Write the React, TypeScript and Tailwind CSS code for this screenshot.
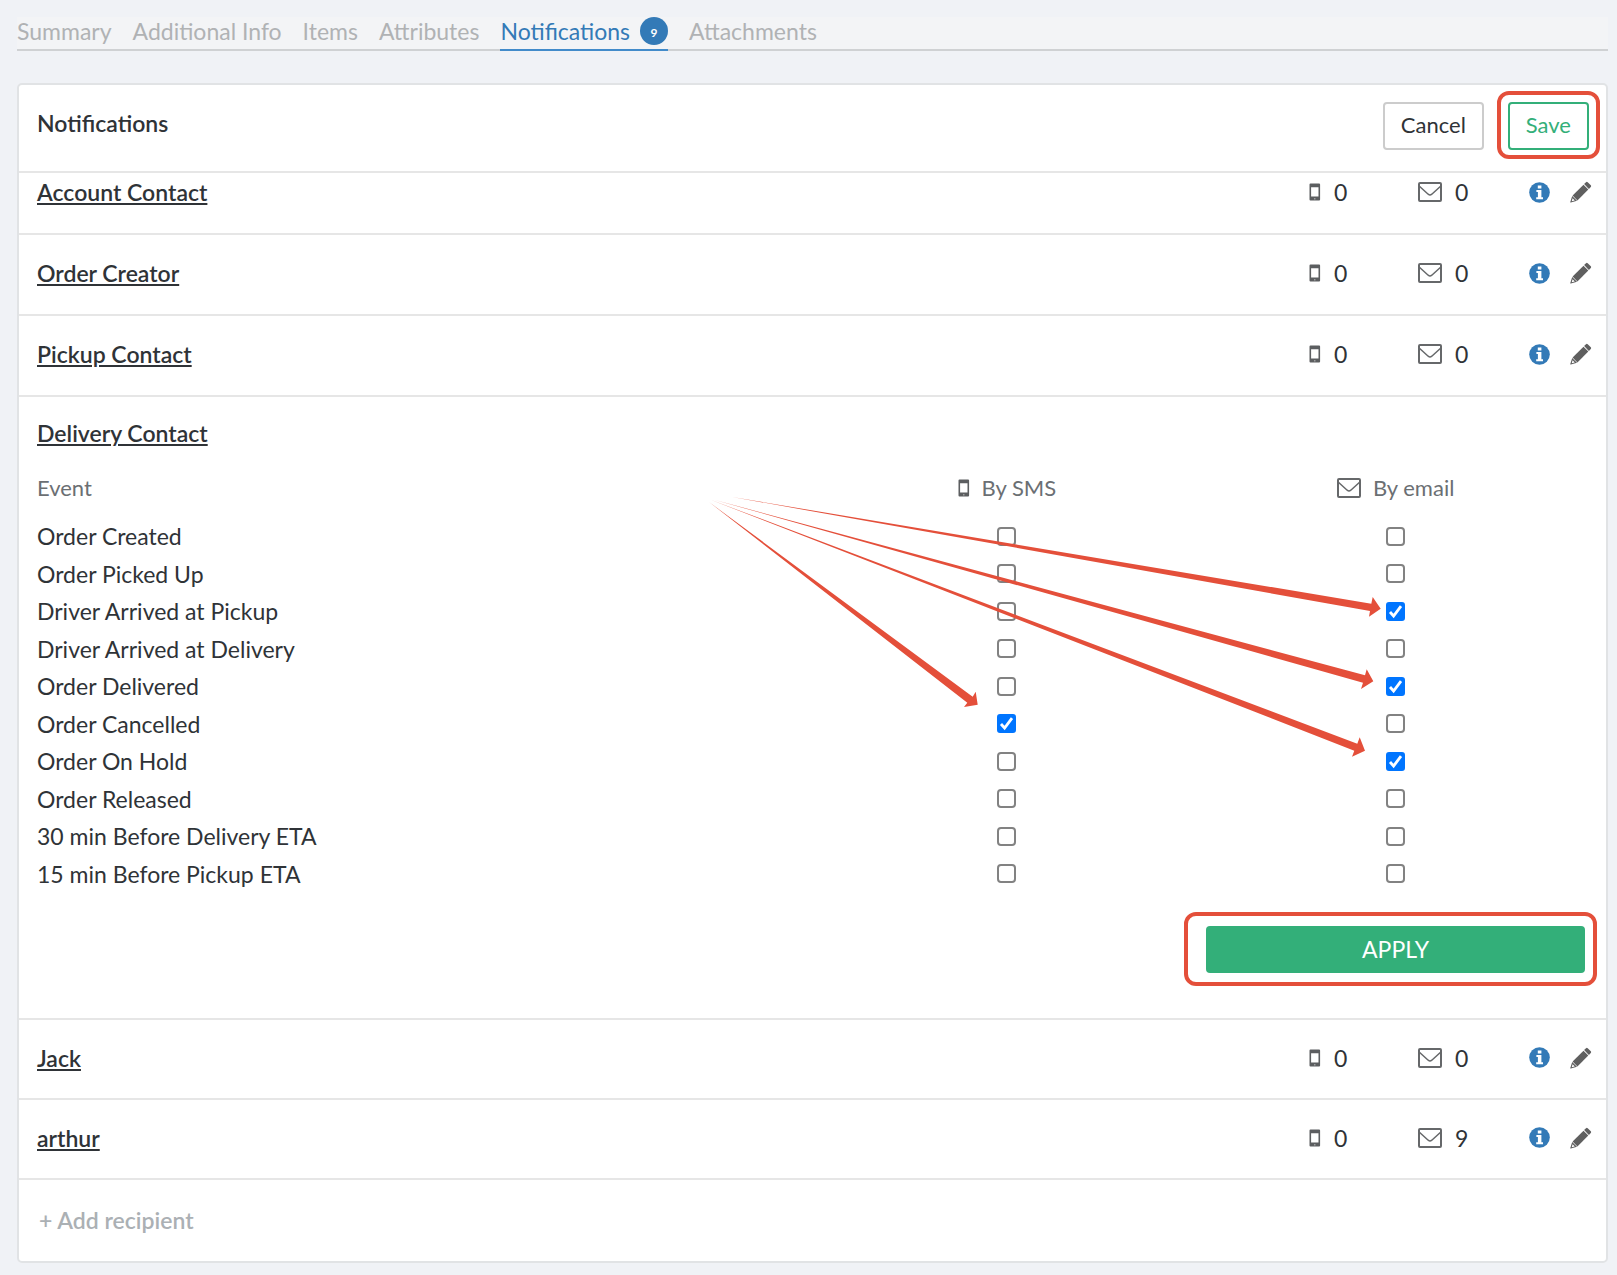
import React, { useState } from "react";

type Recipient = {
    name: string;
    sms: number;
    email: number;
};

type EventRow = {
    label: string;
    sms: boolean;
    email: boolean;
};

const TABS = ["Summary", "Additional Info", "Items", "Attributes", "Notifications", "Attachments"];

const TOP_RECIPIENTS: Recipient[] = [
    { name: "Account Contact", sms: 0, email: 0 },
    { name: "Order Creator", sms: 0, email: 0 },
    { name: "Pickup Contact", sms: 0, email: 0 },
];

const BOTTOM_RECIPIENTS: Recipient[] = [
    { name: "Jack", sms: 0, email: 0 },
    { name: "arthur", sms: 0, email: 9 },
];

const EVENTS: EventRow[] = [
    { label: "Order Created", sms: false, email: false },
    { label: "Order Picked Up", sms: false, email: false },
    { label: "Driver Arrived at Pickup", sms: false, email: true },
    { label: "Driver Arrived at Delivery", sms: false, email: false },
    { label: "Order Delivered", sms: false, email: true },
    { label: "Order Cancelled", sms: true, email: false },
    { label: "Order On Hold", sms: false, email: true },
    { label: "Order Released", sms: false, email: false },
    { label: "30 min Before Delivery ETA", sms: false, email: false },
    { label: "15 min Before Pickup ETA", sms: false, email: false },
];

const PhoneIcon = () => (
    <svg className="w-3 h-[18px] shrink-0" viewBox="0 0 12 18" fill="#5c5e60" aria-hidden="true">
        <path fillRule="evenodd" d="M1.5 .4h8.6a1 1 0 0 1 1 1v15.2a1 1 0 0 1-1 1H1.5a1 1 0 0 1-1-1V1.4a1 1 0 0 1 1-1zM2.1 4.2v9.4h7.4V4.2zM5.2 15.4v.9h1.2v-.9z" />
    </svg>
);

const MailIcon = () => (
    <svg className="w-6 h-5 shrink-0" viewBox="0 0 24 20" fill="none" stroke="#66686a" aria-hidden="true">
        <rect x="1" y="1" width="22" height="18" rx="1" strokeWidth="2" />
        <path d="M1.4 4.2 10.2 12.2Q12 13.6 13.8 12.2L22.6 4.2" strokeWidth="1.5" />
    </svg>
);

const InfoIcon = () => (
    <svg className="size-[21px]" viewBox="0 0 21 21" aria-hidden="true">
        <circle cx="10.5" cy="10.5" r="10.3" fill="#337ab7" />
        <path fill="#fff" d="M8.8 3.4h3.6v3H8.8zM7.4 8h5v7.2h1.6v2H7.2v-2h1.7V10H7.4z" />
    </svg>
);

const PencilIcon = () => (
    <svg className="size-[22px]" viewBox="0 0 22 22" fill="#5f5f5f" aria-hidden="true">
        <path d="M16 1.2a1.2 1.2 0 0 1 1.7 0l3.1 3.1a1.2 1.2 0 0 1 0 1.7l-1.9 1.9-4.8-4.8z" />
        <path d="M13.5 3.7l4.8 4.8L7.4 19.4 2.6 14.6z" />
        <path fillRule="evenodd" d="M2.2 15l4.8 4.8-6.2 1.8a.4.4 0 0 1-.5-.5zM2.6 17.2l-.9 3.1 3.1-.9z" />
    </svg>
);

const Checkbox = ({ label, defaultChecked }: { label: string; defaultChecked: boolean }) => (
    <span className="relative mx-auto block size-[19px]">
        <input
            type="checkbox"
            aria-label={label}
            defaultChecked={defaultChecked}
            className="peer block size-[19px] appearance-none rounded-[4px] border-2 border-[#828282] bg-white checked:rounded-[3px] checked:border-[#0075ff] checked:bg-[#0075ff]"
        />
        <svg className="pointer-events-none absolute inset-0 hidden size-[19px] peer-checked:block" viewBox="0 0 19 19" fill="none" aria-hidden="true">
            <path d="M4 10l3.6 4L15 4.2" stroke="#fff" strokeWidth="2.8" />
        </svg>
    </span>
);

const RecipientRow = ({ name, sms, email }: Recipient) => (
    <div className="flex h-full items-center border-b-2 border-[#e6e6e6] pb-[3px] pl-[18px] pr-[14px]">
        <a href="#" className="mr-auto font-semibold underline">
            {name}
        </a>
        <span className="flex w-[109px] items-center gap-[13px]">
            <PhoneIcon />
            {sms}
        </span>
        <span className="flex w-[111px] items-center gap-[13px]">
            <MailIcon />
            {email}
        </span>
        <button type="button" aria-label={`About ${name}`} className="mr-5">
            <InfoIcon />
        </button>
        <button type="button" aria-label={`Edit ${name}`}>
            <PencilIcon />
        </button>
    </div>
);

const Arrows = () => (
    <svg className="pointer-events-none absolute right-[206px] top-[83px] h-[290px] w-[700px]" viewBox="700 480 700 290" fill="#e44f3a" aria-hidden="true">
        <path d="M709 502 972.7 696.7 975.7 691.7 977.7 704.7 964 707 967.3 702.7z" />
        <path d="M732 497 1371.3 603.7 1372.7 597 1380.7 608.7 1369 616.7 1370 611z" />
        <path d="M715 500 1365 675.3 1366.7 669.3 1373.3 681.3 1361 689 1363 682.7z" />
        <path d="M710 499.5 1357.3 743.7 1359.7 737.3 1365 750.7 1352 756.7 1354.3 750.7z" />
    </svg>
);

const App = () => {
    const [activeTab, setActiveTab] = useState("Notifications");

    return (
        <div className="min-h-screen bg-[#f0f2f6] pb-[11px] pl-[17px] pr-[9px] pt-[17px] font-['Lato','Liberation_Sans',sans-serif] text-[23px] leading-[30px] text-[#2f3337]">
            <nav className="flex h-[34px] gap-[21px] border-b-2 border-[#cfd1d3] bg-[#f3f4f6]">
                {TABS.map((tab) => (
                    <button
                        key={tab}
                        type="button"
                        onClick={() => setActiveTab(tab)}
                        className={
                            tab === activeTab
                                ? "flex h-[34px] items-center border-b-2 border-[#428bca] pb-1 text-[#337ab7]"
                                : "flex h-[34px] items-center border-b-2 border-[#cfd1d3] pb-1 text-[#b0b2b4]"
                        }
                    >
                        {tab}
                        {tab === "Notifications" && (
                            <span className="ml-[10px] flex size-7 items-center justify-center rounded-full bg-[#337ab7] pt-1 text-[12px] font-bold text-white">
                                9
                            </span>
                        )}
                    </button>
                ))}
            </nav>

            <main className="mt-8 rounded-[5px] border-2 border-[#e1e3e5] bg-white">
                <header className="flex h-[88px] items-start border-b-2 border-[#e6e6e6] pl-[18px] pr-[17px] pt-[17px]">
                    <h1 className="mr-auto mt-[6px] font-semibold">Notifications</h1>
                    <button type="button" className="h-12 rounded-[4px] border-2 border-[#cccccc] bg-white px-4 pb-0.5 text-[22px]">
                        Cancel
                    </button>
                    <button type="button" className="relative ml-6 h-12 rounded-[4px] border-2 border-[#33af79] bg-white px-4 pb-0.5 text-[22px] text-[#33af79]">
                        Save
                        <span className="pointer-events-none absolute -bottom-[11px] -left-[13px] -right-[13px] -top-[13px] rounded-xl border-4 border-[#e44f3a]" />
                    </button>
                </header>

                <div className="overflow-hidden">
                    <div className="-mt-[19px] grid auto-rows-[81px]">
                        {TOP_RECIPIENTS.map((r) => (
                            <RecipientRow key={r.name} {...r} />
                        ))}
                    </div>

                    <section className="relative border-b-2 border-[#e6e6e6] px-4 pb-[45px]">
                        <div className="pb-[11px] pl-0.5 pt-[21px]">
                            <a href="#" className="font-semibold underline">
                                Delivery Contact
                            </a>
                        </div>
                        <table className="w-full table-fixed">
                            <thead>
                                <tr className="h-[58px] text-[22px] text-[#6b6f73]">
                                    <th scope="col" className="w-1/2 pl-0.5 text-left font-normal">
                                        Event
                                    </th>
                                    <th scope="col" className="w-1/4 font-normal">
                                        <span className="flex items-center justify-center gap-3">
                                            <PhoneIcon />
                                            By SMS
                                        </span>
                                    </th>
                                    <th scope="col" className="w-1/4 font-normal">
                                        <span className="flex items-center justify-center gap-3">
                                            <MailIcon />
                                            By email
                                        </span>
                                    </th>
                                </tr>
                            </thead>
                            <tbody>
                                {EVENTS.map((event) => (
                                    <tr key={event.label} className="odd:h-[38px] even:h-[37px]">
                                        <td className="pl-0.5">{event.label}</td>
                                        <td>
                                            <Checkbox label={`${event.label} by SMS`} defaultChecked={event.sms} />
                                        </td>
                                        <td>
                                            <Checkbox label={`${event.label} by email`} defaultChecked={event.email} />
                                        </td>
                                    </tr>
                                ))}
                            </tbody>
                        </table>
                        <div className="mt-[34px] flex justify-end">
                            <div className="w-1/4 px-[5px]">
                                <button type="button" className="relative h-[47px] w-full rounded-[4px] bg-[#33af79] pb-0.5 text-white">
                                    APPLY
                                    <span className="pointer-events-none absolute -bottom-[13px] -left-[22px] -right-3 -top-[14px] rounded-xl border-4 border-[#e44f3a]" />
                                </button>
                            </div>
                        </div>
                        <Arrows />
                    </section>

                    <div className="grid auto-rows-[80px]">
                        {BOTTOM_RECIPIENTS.map((r) => (
                            <RecipientRow key={r.name} {...r} />
                        ))}
                    </div>

                    <button type="button" className="flex h-[81px] w-full items-center px-5 pb-0.5 font-semibold text-[#abb0b4]">
                        + Add recipient
                    </button>
                </div>
            </main>
        </div>
    );
};

export default App;
